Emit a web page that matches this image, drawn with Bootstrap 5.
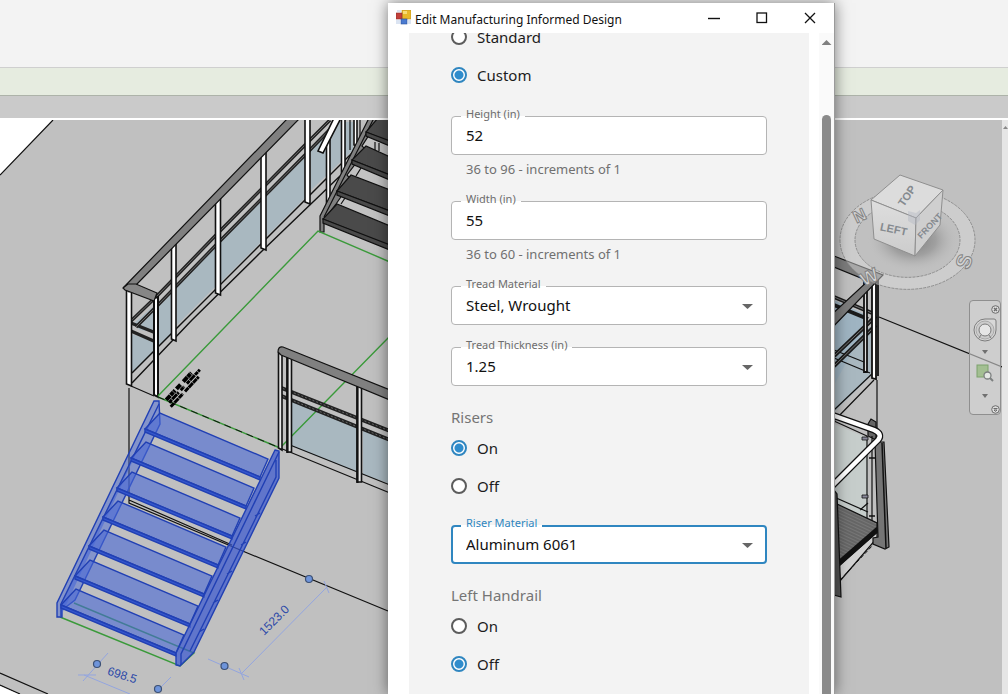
<!DOCTYPE html>
<html lang="en">
<head>
<meta charset="utf-8">
<meta name="viewport" content="width=device-width, initial-scale=1">
<title>Edit Manufacturing Informed Design</title>
<link href="https://cdn.jsdelivr.net/npm/bootstrap@5.3.0/dist/css/bootstrap.min.css" rel="stylesheet">
<style>
  :root { --panel: #f3f3f3; --accent: #2f86c0; --outline: #b4b4b4; }
  body { font-family: "Noto Sans", "Open Sans", sans-serif; background: #c0c0c0; }
  .ribbon { height: 67px; background: #f3f3f3; }
  .options-bar { height: 28px; background: #e6ece0; border-top: 1px solid #cfcfcf; }
  .tab-strip { height: 25px; background: #cacaca; border-top: 1px solid #adb3a9; border-bottom: 2px solid #fff; }
  .viewport { background: #c0c0c0; min-height: 0; }
  .edge-strip { width: 6px; background: #e6e6e6; }
  .edge-strip svg { width: 6px; height: 12px; }

  .nav-tools { right: 7px; top: 180px; width: 32px; height: 115px; border: 1px solid #8f8f8f; border-radius: 4px; background: rgba(215,215,215,.6); }
  .nav-tools button { line-height: 0; }

  .dialog-window { left: 388px; top: 3px; bottom: 0; width: 447px; background: #fff; border-right: 1px solid #9a9a9a; box-shadow: 0 0 14px rgba(0,0,0,.5); }
  .title-bar { height: 30px; font-size: 12px; color: #111; }
  .title-bar svg { margin-bottom: 1px; }
  .title-bar button { width: 48px; height: 30px; line-height: 0; }
  .dialog-panel { background: var(--panel); margin-left: 21px; margin-right: 10px; padding: 0 42px; }
  .dialog-form { margin-top: -15px; }
  .scroll-track { width: 15px; background: #fafafa; }
  .scroll-arrow { width: 10px; height: 5px; background: #808080; clip-path: polygon(50% 0, 100% 100%, 0 100%); margin-top: 7px; }
  .scroll-thumb { width: 9px; background: #8a8a8a; border-radius: 5px 5px 0 0; margin-top: 70px; }

  .radio-row { height: 38px; font-size: 15px; color: #1c1c1c; }
  .radio-row .form-check-input { width: 16px; height: 16px; margin: 0 10px 0 0; border: 2px solid #5c5c5c; background: #fff; box-shadow: none; }
  .radio-row .form-check-input:checked { border-color: var(--accent); background: radial-gradient(circle, #2f8ccc 0 4px, #fff 5px); }
  .group-title { font-size: 15px; line-height: 24px; color: #757575; margin: 19px 0 0; }

  .outlined { margin-top: 22px; }
  .outlined.after-hint { margin-top: 18px; }
  .outlined .form-control, .outlined .form-select { height: 39px; padding: 0 14px 1px; font-size: 15px; color: #111; border: 1px solid var(--outline); border-radius: 4px; background: #fff; box-shadow: none; }
  .outlined label { left: 10px; top: -10px; padding: 0 5px; font-size: 11px; line-height: 16px; color: #6d6d6d; background: linear-gradient(var(--panel) 10px, #fff 10px); }
  .outlined.is-active .form-select { border: 2px solid var(--accent); padding: 0 13px 1px; }
  .outlined.is-active label { color: var(--accent); }
  .caret-down { right: 14px; top: 18px; width: 11px; height: 5px; background: #666; clip-path: polygon(0 0, 100% 0, 50% 100%); pointer-events: none; }
  .hint { font-size: 13px; line-height: 28px; color: #707070; padding-left: 15px; }
</style>
</head>
<body>
<div class="vh-100 d-flex flex-column position-relative overflow-hidden">
  <header>
    <div class="ribbon"></div>
    <div class="options-bar"></div>
    <div class="tab-strip"></div>
  </header>

  <main class="viewport flex-fill d-flex position-relative">
    <svg class="flex-fill w-100 h-100" viewBox="0 120 1002 574" preserveAspectRatio="xMinYMin slice" fill="none" stroke="#111" stroke-width="1.2" role="img" aria-label="3D view of stairs and railings">
      <defs>
        <linearGradient id="cubeSide" x1="0" y1="0" x2="0" y2="1"><stop offset="0" stop-color="#dedede"/><stop offset="1" stop-color="#cccccc"/></linearGradient>
        <radialGradient id="cubeShade"><stop offset="0" stop-color="#808080"/><stop offset=".5" stop-color="#a0a0a0"/><stop offset="1" stop-color="#c0c0c0" stop-opacity="0"/></radialGradient>
        <pattern id="grate" width="3" height="3" patternUnits="userSpaceOnUse" patternTransform="rotate(25)"><rect width="3" height="3" fill="#777" stroke="none"/><path d="M0 1H3" stroke="#555" stroke-width="1"/></pattern>
      </defs>

      <!-- floor edges -->
      <path d="M0 120H53L0 175Z" fill="#fff" stroke="none"/>
      <path d="M53 120L0 175M0 673L48 694M0 685L20 694"/>
      <path d="M0 686L18 694H0Z" fill="#fff" stroke="none"/>
      <path d="M129 388V503L245 552L388 611M129 500L232 545"/>

      <!-- left railing glass -->
      <g fill="#a9b8c0" stroke="none">
        <path d="M132 334L154 342V352L132 373ZM133 324L155 305V332L140 330Z"/>
        <path d="M158 307L171 294V335L158 347Z"/>
        <path d="M177 284L215 247V287L177 325Z"/>
        <path d="M221 240L261 201V242L221 282Z"/>
        <path d="M267 196L305 157V198L267 236Z"/>
        <path d="M311 150L338 122H353V150L311 190Z"/>
      </g>
      <path d="M132 373L353 152M132 383L192 320L261 252L340 176" stroke-width="1.4"/>
      <g stroke-width="3.4" stroke="#222">
        <path d="M131 321L158 295L217 234L307 143L330 120"/>
        <path d="M136 327L158 305L217 244L307 153L339 120"/>
        <path d="M131 323L156 333M131 331L156 342"/>
      </g>
      <g stroke-width="1" stroke="#666">
        <path d="M131 321L158 295L217 234L307 143L330 120M136 327L158 305L217 244L307 153L339 120"/>
      </g>
      <g fill="#fff" stroke-width="1.6">
        <path d="M126.500 290V384L131.500 386V291Z"/>
        <path d="M154 298V395L158 397V297Z" stroke-width="2"/>
        <path d="M171.500 243V339L176 341V242Z"/>
        <path d="M215.500 199V293L220.500 295V195Z"/>
        <path d="M261 154V248L266 250V150Z"/>
        <path d="M305 118V202L310 204V118Z"/>
        <path d="M326.500 141V203L330 204V139Z"/>
        <path d="M341.500 118V173L345 175V118Z"/>
        <path d="M354 118V145L357 146V118Z"/>
        <path d="M318 151L323 153L341 118H334Z"/>
      </g>
      <path d="M350 118V150M360 118V145M131 386L154 396"/>
      <path d="M124 287L288 118H300L136 285L129 292Z" fill="#808080"/>
      <path d="M123 288L128 284L136 284L157 293L154 301L125 290Z" fill="#868686"/>

      <!-- upper staircase -->
      <path d="M320 216L369 118H388V258L325 232H320Z" fill="#c2c2c2" stroke="none"/>
      <path d="M320 216L369 118H380L362 146L366 150L347 175L352 181L336 204L324 220V232H320Z" fill="#808080"/>
      <path d="M324 217L374 118M341 204L347 195M356 176L361 168M375 142V150M379 143V151"/>
      <g fill="#4a4a4a">
        <path d="M378 118L366 132L390 142V118Z"/><path d="M366 132L390 141V146L366 136Z"/>
        <path d="M366 146L352 160L390 175V157Z"/><path d="M352 160L390 175V180L352 164Z"/>
        <path d="M351 175L337 191L390 211V190Z"/><path d="M337 191L390 211V216L337 195Z"/>
        <path d="M337 204L323 219L390 246V226Z"/><path d="M323 219L390 245V250L323 223Z"/>
      </g>

      <!-- middle railing -->
      <g fill="#a9b8c0" stroke="none">
        <path d="M291 398L357 425V472L291 446Z"/><path d="M363 428L390 439V484L363 474Z"/>
      </g>
      <g stroke="#3a9a3a" stroke-width="1.4">
        <path d="M158 396L318 231L390 262M390 336L280 448M158 397L280 448"/>
        <path d="M60 617L180 666L194 653L74 603"/>
      </g>
      <path d="M158 397L280 448" stroke-width="1" stroke-dasharray="7 5"/>
      <path d="M290 445L390 485M280 448L390 493"/>
      <path d="M279 387L390 431M279 395L390 440" stroke-width="4" stroke="#222"/>
      <path d="M279 387L390 431M279 395L390 440" stroke-width="1" stroke="#666" stroke-dasharray="2 2"/>
      <g fill="#e6e6e6" stroke-width="1.6">
        <path d="M278.500 353V448L282 450V354Z"/>
        <path d="M287 357V452L291.500 452V358Z"/>
        <path d="M357 386V482L361.500 482V387Z"/>
      </g>
      <path d="M287.500 357V453M357.500 386V483" stroke-width="2.200"/>
      <path d="M278 352Q278 346 283 347L390 390V400L281 355Z" fill="#808080"/>

      <!-- drawing note, too small to read -->
      <g stroke="#000" stroke-width="4" transform="rotate(-47 167 402)">
        <path d="M168 400h13m2 0h6m4 0h12" stroke-dasharray="6 .5 4 .5"/>
        <path d="M168 404h14m3 0h5m4 0h19" stroke-dasharray="4 .5 7 .5" stroke-width="3"/>
        <path d="M166 408h18m3 0h20" stroke-dasharray="5 .5 6 .5" stroke-width="3"/>
      </g>

      <!-- selected staircase -->
      <g stroke="#2140b4" stroke-width="1.4" fill="rgba(72,103,214,.6)">
        <path d="M154 401H159L160 424L75 600L62 610V617H57V603Z" fill="rgba(72,103,214,.5)"/>
        <path d="M159 404L61 604V616"/>
        <g id="tread"><path d="M160 413L145 429L260 477L268 459Z"/><path d="M145 429L260 477V480L145 432Z" fill="#3658ce"/></g>
        <use href="#tread" x="-14" y="29"/><use href="#tread" x="-28" y="59"/><use href="#tread" x="-42" y="88"/>
        <use href="#tread" x="-56" y="117"/><use href="#tread" x="-70" y="147"/><use href="#tread" x="-84" y="176"/>
        <path d="M275 450L279 451V478L194 652L180 666L176 665V653Z" fill="rgba(58,88,206,.72)"/>
        <path d="M279 452L181 654V665M276 460V477L190 651M260 513l-5 3M246 542l-5 3M232 571l-5 3M218 600l-5 3M204 629l-5 3" fill="none"/>
      </g>

      <!-- temporary dimensions -->
      <g stroke="#93a5df" stroke-width="1">
        <path d="M242 673L327 587M208 659L249 677M324 581L329 593M239 668L244 680"/>
        <path d="M84 675L130 694M108 653L83 681M171 677L156 692M78 675H96"/>
      </g>
      <g fill="#6e94da" stroke="#3c5074" stroke-width="1.2">
        <circle cx="97" cy="664" r="3.500"/><circle cx="158" cy="689" r="3.500"/><circle cx="224.500" cy="666" r="3.500"/><circle cx="309" cy="579" r="3.500"/>
      </g>
      <g fill="#2c49a8" stroke="none" font-family="'Liberation Sans', Arial, sans-serif" font-size="12" text-anchor="middle">
        <text transform="translate(277 623) rotate(-45)">1523.0</text>
        <text transform="translate(121 679) rotate(17)">698.5</text>
      </g>

      <!-- right railing -->
      <path d="M834 300L864 314V372L834 412Z" fill="#9fb4c2" stroke="none"/>
      <path d="M864 330L872 326V375L834 412V385Z" fill="#a9b8c0" stroke="none"/>
      <path d="M834 350L864 362M834 358L870 373M834 410L874 372M834 421L874 380M877 380V440M879 317L1002 367"/>
      <path d="M834 297L872 313M834 305L868 319M834 356L876 316M834 366L876 325" stroke-width="4" stroke="#1c1c1c"/>
      <path d="M834 297L872 313M834 356L876 316M834 366L876 325" stroke-width="1" stroke="#777"/>
      <g fill="#ddd" stroke-width="1.8">
        <path d="M864 280V372H867V280Z"/><path d="M872 276V378L876 379V276Z" fill="#fff"/><path d="M878 278V376"/>
      </g>
      <path d="M834 256L883 275L830 330V316L868 281L834 267Z" fill="#7c7c7c"/>

      <!-- lower right gate -->
      <path d="M834 424L868 438V523L834 506Z" fill="#c6cdcb" stroke="none"/>
      <path d="M867 436V520M872 436V530M868 424L871 419L876 422V440L868 436Z" fill="#666"/>
      <path d="M835 503L877 523V531L839 563Z" fill="url(#grate)"/>
      <path d="M834 497L868 512M860 510L868 503M834 421L867 436"/>
      <path d="M839 566L877 532V538L840 581Z" fill="#d2d2d2"/>
      <path d="M839 563L878 529" stroke-width="5"/>
      <path d="M840 580L873 545M846 574L852 567" stroke-width="1" stroke-dasharray="4 2"/>
      <path d="M875 442H884L889 547L885 549L873 544V538L878 537Z" fill="#757575"/>
      <path d="M882 443L886 548M869 458h6M869 516h6" stroke-width="1.500"/>
      <path d="M862 437h6v3h-6ZM862 495h6v3h-6Z" fill="#889" stroke-width=".8"/>
      <path d="M834 490L837 494L841 597L834 595Z" fill="#555"/>
      <path d="M832 415L874 430Q883 434 878 440L832 486" stroke-width="7"/>
      <path d="M832 415L874 430Q883 434 878 440L832 486" stroke="#fff" stroke-width="4.500"/>

      <!-- view cube -->
      <g stroke="#8f8f8f" stroke-width="1">
        <path fill-rule="evenodd" fill="rgba(222,222,222,.45)" stroke-dasharray="3 1" d="M840 240a67 49 0 1 0 135 0a67 49 0 1 0 -135 0ZM855 240a52 37 0 1 0 105 0a52 37 0 1 0 -105 0Z"/>
        <ellipse cx="913" cy="240" rx="46" ry="32" fill="url(#cubeShade)" stroke="none"/>
        <path d="M900 175L943 190L916 218L871 200Z" fill="#dcdcdc"/>
        <path d="M871 200L916 218L915 256L874 239Z" fill="url(#cubeSide)"/>
        <path d="M916 218L943 190L940 225L915 256Z" fill="#cfcfcf"/>
        <path d="M908 211L916 213L920 210L920 220L915 225L908 221Z" fill="rgba(180,185,195,.45)" stroke="none"/>
        <g fill="#858a8f" stroke="none" font-family="'Liberation Sans Narrow', 'Liberation Sans', Arial, sans-serif" font-weight="700" text-anchor="middle">
          <text font-size="11" transform="translate(910 198) rotate(-56)">TOP</text>
          <text font-size="11" transform="translate(893 233) rotate(12)">LEFT</text>
          <text font-size="9" transform="translate(932 228) rotate(-46)">FRONT</text>
        </g>
        <g fill="#d6d6d6" stroke="#858585" font-family="'Liberation Sans', Arial, sans-serif" font-weight="700" text-anchor="middle">
          <text font-size="17" transform="translate(862 221) rotate(-25)">N</text>
          <text font-size="21" transform="translate(971 264) rotate(-70)">S</text>
          <text font-size="19" transform="translate(872 283) rotate(-25)">W</text>
        </g>
      </g>
    </svg>

    <div class="nav-tools position-absolute d-flex flex-column align-items-center">
      <button type="button" class="btn p-0 border-0 align-self-end mt-1" aria-label="Close"><svg width="9" height="9" viewBox="0 0 9 9" fill="#ddd" stroke="#6c6c6c"><circle cx="4.500" cy="4.500" r="3.800"/><path d="M3 3l3 3M6 3l-3 3" stroke-width="1.300"/></svg></button>
      <button type="button" class="btn p-0 border-0 mt-1" aria-label="Navigation wheel"><svg width="24" height="24" viewBox="0 0 24 24" fill="#d8d8d8" stroke="#7c7c7c"><path d="M12 1H21Q23 1 23 3V12A11 11 0 1 1 12 1Z"/><circle cx="12" cy="12" r="9" fill="#ccc" stroke="#aaa"/><circle cx="12" cy="12" r="6" fill="#e6e6e6"/><path d="M8 17L6 20M16 17l2 3"/></svg></button>
      <button type="button" class="btn p-0 border-0 mt-1" aria-label="Wheel options"><svg width="6" height="10" viewBox="0 0 6 10"><path d="M0 4H6L3 8Z" fill="#707070"/></svg></button>
      <button type="button" class="btn p-0 border-0 mt-2" aria-label="Zoom region"><svg width="18" height="18" viewBox="0 0 18 18"><rect x="1" y="1" width="11" height="12" fill="#a3bf92" stroke="#7da26c"/><circle cx="11.500" cy="11.500" r="3.500" fill="#e4e8e4" stroke="#7d8080" stroke-width="1.300"/><path d="M14 14l3 3" stroke="#7d8080" stroke-width="2"/></svg></button>
      <button type="button" class="btn p-0 border-0 mt-2" aria-label="Zoom options"><svg width="6" height="10" viewBox="0 0 6 10"><path d="M0 4H6L3 8Z" fill="#707070"/></svg></button>
      <button type="button" class="btn p-0 border-0 align-self-end mt-auto mb-0" aria-label="Customize"><svg width="9" height="9" viewBox="0 0 9 9" fill="#ddd" stroke="#6c6c6c"><circle cx="4.500" cy="4.500" r="3.800"/><path d="M2.500 3.500h4M3 5h3L4.500 6.500Z"/></svg></button>
    </div>
    <div class="edge-strip flex-shrink-0"><svg class="d-block" viewBox="0 0 6 12"><path d="M1 9L3.500 6L6 9" fill="#888"/></svg></div>
  </main>

  <section class="dialog-window position-absolute d-flex flex-column" role="dialog" aria-labelledby="dlgTitle">
    <div class="title-bar d-flex align-items-center flex-shrink-0">
      <svg class="ms-2 flex-shrink-0" width="15" height="15" viewBox="0 0 15 15"><rect x="6" y="0" width="9" height="9" fill="#e9b829" stroke="#b58a1c" stroke-width=".6"/><path d="M7 1h4v3H7z" fill="#f8dc74"/><rect x="0" y="3" width="6" height="6" fill="#c2403a" stroke="#8d2b28" stroke-width=".6"/><rect x="5" y="9" width="6" height="5" fill="#4a7ad0" stroke="#2d559f" stroke-width=".6"/><path d="M0 10h4v4H0zM12 10h3v4h-3zM1 0h4v2H1z" fill="#dbe4f2"/></svg>
      <span id="dlgTitle" class="me-auto ps-1 pt-1 lh-1 text-nowrap">Edit Manufacturing Informed Design</span>
      <button type="button" class="btn p-0 border-0 rounded-0" aria-label="Minimize"><svg width="12" height="12" viewBox="0 0 12 12"><path d="M0 6.500H12" stroke="#111" stroke-width="1.400"/></svg></button>
      <button type="button" class="btn p-0 border-0 rounded-0" aria-label="Maximize"><svg width="12" height="12" viewBox="0 0 12 12"><rect x="1" y="1" width="9.500" height="9.500" fill="none" stroke="#111" stroke-width="1.300"/></svg></button>
      <button type="button" class="btn p-0 border-0 rounded-0" aria-label="Close"><svg width="12" height="12" viewBox="0 0 12 12"><path d="M1 1L11 11M11 1L1 11" stroke="#111" stroke-width="1.300"/></svg></button>
    </div>

    <div class="flex-fill d-flex overflow-hidden">
      <div class="dialog-panel flex-fill overflow-hidden">
        <form class="dialog-form">
          <div class="radio-row d-flex align-items-center"><input class="form-check-input" type="radio" name="size" id="sizeStd"><label for="sizeStd">Standard</label></div>
          <div class="radio-row d-flex align-items-center"><input class="form-check-input" type="radio" name="size" id="sizeCus" checked><label for="sizeCus">Custom</label></div>

          <div class="outlined">
            <div class="position-relative"><input class="form-control" type="text" id="heightIn" value="52" aria-describedby="heightHint"><label class="position-absolute" for="heightIn">Height (in)</label></div>
            <div class="hint" id="heightHint">36 to 96 - increments of 1</div>
          </div>
          <div class="outlined after-hint">
            <div class="position-relative"><input class="form-control" type="text" id="widthIn" value="55" aria-describedby="widthHint"><label class="position-absolute" for="widthIn">Width (in)</label></div>
            <div class="hint" id="widthHint">36 to 60 - increments of 1</div>
          </div>
          <div class="outlined after-hint position-relative">
            <select class="form-select" id="treadMat"><option>Steel, Wrought</option></select><label class="position-absolute" for="treadMat">Tread Material</label><span class="caret-down position-absolute"></span>
          </div>
          <div class="outlined position-relative">
            <select class="form-select" id="treadThk"><option>1.25</option></select><label class="position-absolute" for="treadThk">Tread Thickness (in)</label><span class="caret-down position-absolute"></span>
          </div>

          <div role="radiogroup" aria-labelledby="risersTitle">
            <p class="group-title" id="risersTitle">Risers</p>
            <div class="radio-row d-flex align-items-center"><input class="form-check-input" type="radio" name="risers" id="risersOn" checked><label for="risersOn">On</label></div>
            <div class="radio-row d-flex align-items-center"><input class="form-check-input" type="radio" name="risers" id="risersOff"><label for="risersOff">Off</label></div>
          </div>

          <div class="outlined after-hint is-active position-relative mt-3 pt-1">
            <div class="position-relative"><select class="form-select" id="riserMat"><option>Aluminum 6061</option></select><label class="position-absolute" for="riserMat">Riser Material</label><span class="caret-down position-absolute"></span></div>
          </div>

          <div role="radiogroup" aria-labelledby="railTitle">
            <p class="group-title" id="railTitle">Left Handrail</p>
            <div class="radio-row d-flex align-items-center"><input class="form-check-input" type="radio" name="rail" id="railOn"><label for="railOn">On</label></div>
            <div class="radio-row d-flex align-items-center"><input class="form-check-input" type="radio" name="rail" id="railOff" checked><label for="railOff">Off</label></div>
          </div>
        </form>
      </div>
      <div class="scroll-track d-flex flex-column align-items-center flex-shrink-0">
        <div class="scroll-arrow"></div>
        <div class="scroll-thumb flex-fill"></div>
      </div>
    </div>
  </section>
</div>
<script src="https://cdn.jsdelivr.net/npm/bootstrap@5.3.0/dist/js/bootstrap.bundle.min.js"></script>
</body>
</html>
